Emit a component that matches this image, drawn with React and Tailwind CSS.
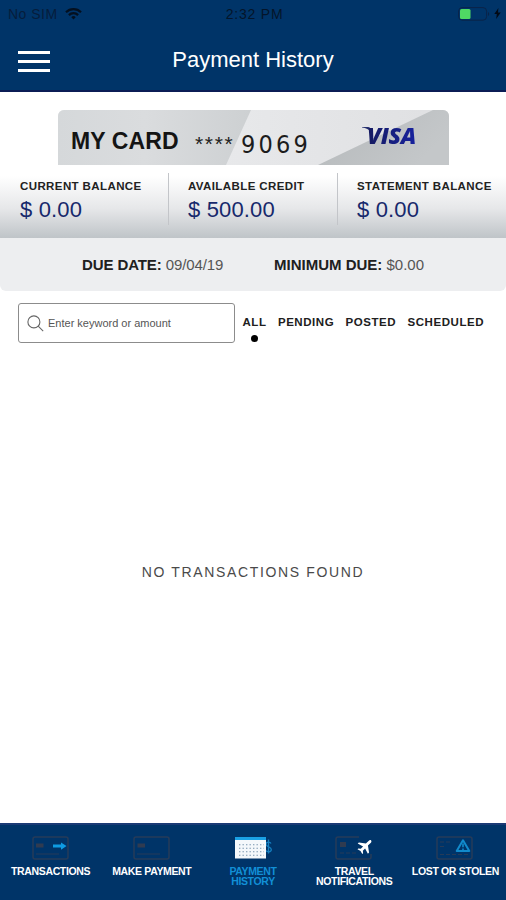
const balances = [
  { label: 'CURRENT BALANCE', amount: '$ 0.00' },
  { label: 'AVAILABLE CREDIT', amount: '$ 500.00' },
  { label: 'STATEMENT BALANCE', amount: '$ 0.00' },
];

const filters = ['ALL', 'PENDING', 'POSTED', 'SCHEDULED'];

function StatusBar() {
  return (
    <div className="flex h-7 items-center pr-[5px] pl-2 text-[14px] text-[#04152a]">
      <div className="flex flex-1 items-center gap-[7px]">
        <span className="tracking-[0.5px] text-[#061d3c]">No SIM</span>
        <svg className="-mt-px" width="17" height="13" viewBox="0 0 17 13" fill="none" stroke="#04101f" strokeWidth="2.2">
          <path d="M1 5.2a10.6 10.6 0 0 1 15 0" />
          <path d="M3.9 8.1a6.5 6.5 0 0 1 9.2 0" />
          <path d="M8.5 12.4 6.3 10.2a3.1 3.1 0 0 1 4.4 0Z" fill="#04101f" stroke="none" />
        </svg>
      </div>
      <span className="tracking-[0.8px]">2:32 PM</span>
      <div className="-mt-px flex flex-1 items-center justify-end gap-1">
        <svg width="32" height="14" viewBox="0 0 32 14">
          <rect x="0.6" y="0.6" width="28" height="12.6" rx="3.6" fill="none" stroke="#0a2348" />
          <rect x="2" y="2" width="10.5" height="10" rx="1.5" fill="#4fd964" />
          <path d="M30 5v4c1.6-.6 1.6-3.4 0-4Z" fill="#0a2348" />
        </svg>
        <svg width="7" height="11" viewBox="0 0 7 11">
          <path d="M4.4 0 .3 6h2.5L2.2 11l4.5-6.4H4Z" fill="#020a16" />
        </svg>
      </div>
    </div>
  );
}

function Header() {
  return (
    <header className="h-[92px] border-b-2 border-[#0b1c55] bg-[#003468]">
      <StatusBar />
      <div className="flex h-[62px] items-center pl-[18px]">
        <button aria-label="Menu" className="mt-1 flex w-8 flex-col gap-[6px]">
          <span className="h-[3px] bg-white" />
          <span className="h-[3px] bg-white" />
          <span className="h-[3px] bg-white" />
        </button>
        <h1 className="flex-1 pr-[50px] text-center text-[22px] text-white">Payment History</h1>
      </div>
    </header>
  );
}

function CreditCard() {
  return (
    <div className="mt-[18px] mr-[57px] ml-[58px] grid h-[55px] overflow-hidden rounded-t-[6px]">
      <svg className="col-start-1 row-start-1" width="391" height="55" viewBox="0 0 391 55">
        <defs>
          <linearGradient id="cardLeft" x1="0" y1="0" x2="1" y2="0">
            <stop offset="0" stopColor="#d5d8da" />
            <stop offset="0.45" stopColor="#dadcde" />
            <stop offset="1" stopColor="#cdd0d2" />
          </linearGradient>
          <linearGradient id="cardMiddle" x1="0" y1="0" x2="1" y2="0">
            <stop offset="0.4" stopColor="#e8e9eb" />
            <stop offset="1" stopColor="#dfe0e2" />
          </linearGradient>
          <linearGradient id="cardRight" x1="0" y1="0" x2="1" y2="0.4">
            <stop offset="0" stopColor="#b5b9bb" />
            <stop offset="1" stopColor="#c4c7c9" />
          </linearGradient>
        </defs>
        <path d="M0 0h391v55H0Z" fill="url(#cardMiddle)" />
        <path d="M0 0h193l-25 55H0Z" fill="url(#cardLeft)" />
        <path d="M375 0h16v55H260Z" fill="url(#cardRight)" />
      </svg>
      <div className="col-start-1 row-start-1 flex items-center pt-[8px] pl-[13px]">
        <span className="w-[124px] text-[23px] font-bold tracking-[0.1px] text-[#141414]">MY CARD</span>
        <span className="w-[46px] pt-[4px] text-[21px] leading-none tracking-[1.7px] text-[#222]">****</span>
        <span className="w-[121px] pt-[6px] font-['DejaVu_Sans_Condensed','DejaVu_Sans',sans-serif] text-[25px] leading-none tracking-[3.2px] text-[#1c1c1c]">
          9069
        </span>
        <span className="flex items-start pb-3">
          <svg className="mt-[5px] -mr-1" width="9" height="5" viewBox="0 0 9 5">
            <path d="M0 0h6q3 0 3 5Q6 1.5 0 .6Z" fill="#26306f" />
          </svg>
          <span className="bg-gradient-to-r from-[#151a60] to-[#1722a4] bg-clip-text pr-1 font-['Open_Sans',sans-serif] text-[23px] leading-[27px] font-extrabold tracking-[-0.4px] text-transparent italic">
            VISA
          </span>
        </span>
      </div>
    </div>
  );
}

function BalanceSummary() {
  return (
    <section>
      <div className="flex h-[73px] bg-gradient-to-b from-white from-15% via-[#e6e7e9] via-60% to-[#bfc4c8] pt-2">
        {balances.map((item, i) => (
          <div
            key={item.label}
            className={i === 0 ? 'h-[52px] w-[168px] pl-5' : 'h-[52px] w-[169px] border-l border-[#c3c5c9] pl-[19px]'}
          >
            <p className="mt-[5px] text-[11.5px] leading-4 font-bold tracking-[0.4px] whitespace-nowrap text-[#222]">{item.label}</p>
            <p className="text-[22px] leading-[31px] tracking-[0.15px] text-[#17296c]">{item.amount}</p>
          </div>
        ))}
      </div>
      <div className="flex h-[53px] items-center rounded-b-md bg-[#edeef0] pt-px pl-[82px] text-[15px] whitespace-nowrap text-[#555]">
        <p className="w-[192px] tracking-[-0.1px]">
          <b className="text-[#202020]">DUE DATE:</b> 09/04/19
        </p>
        <p>
          <b className="text-[#202020]">MINIMUM DUE:</b> $0.00
        </p>
      </div>
    </section>
  );
}

function FilterBar() {
  return (
    <div className="mt-3 flex h-10 pl-[18px]">
      <label className="flex w-[217px] items-center rounded-[3px] border border-[#8c8c8c] pl-2">
        <svg width="17" height="17" viewBox="0 0 17 17" fill="none" stroke="#666" strokeWidth="1.1">
          <circle cx="6.9" cy="6.9" r="6" />
          <path d="m11.2 11.2 5 5" />
        </svg>
        <input
          className="ml-1 w-44 text-[11px] outline-none placeholder:text-[#555]"
          placeholder="Enter keyword or amount"
        />
      </label>
      <nav className="ml-[7.5px] flex gap-[11.4px] pt-[11.5px] text-[11.5px] leading-[14px] font-bold tracking-[0.55px] text-[#202020]">
        {filters.map((filter, i) => (
          <button key={filter} className="flex flex-col items-center">
            {filter}
            {i === 0 && <span className="mt-[6px] size-[7px] rounded-full bg-black" />}
          </button>
        ))}
      </nav>
    </div>
  );
}

function CardOutline({ children }) {
  return (
    <svg width="38" height="24" viewBox="0 0 38 24" fill="none">
      <rect x="1" y="1" width="35" height="22" rx="2" stroke="#263b58" strokeWidth="1.5" />
      {children}
    </svg>
  );
}

function TransactionsIcon() {
  return (
    <CardOutline>
      <path d="M4 7.5h7.5v4H4Z" fill="#303b50" />
      <path d="M4 18h23" stroke="#263b58" />
      <path d="M21 8.6h8V6.5l5.5 3.6-5.5 3.6v-2.1h-8Z" fill="#0e9be2" />
    </CardOutline>
  );
}

function MakePaymentIcon() {
  return (
    <CardOutline>
      <path d="M4.5 7.5H12v4H4.500Z" fill="#303b50" />
      <path d="M4 18h23" stroke="#263b58" />
    </CardOutline>
  );
}

function HistoryIcon() {
  return (
    <svg width="38" height="24" viewBox="0 0 38 24">
      <path d="M37 7.5c-1-2-5-2-5 .8 0 3 5.3 2 5.3 5.2 0 2.8-4.7 3-5.800.6M34.5 3.500v14" fill="none" stroke="#147fc0" strokeWidth="1.3" />
      <rect x="1" y="1" width="31" height="21.5" fill="#f4f8fb" />
      <rect x="1" y="1" width="31" height="3" fill="#1aa0e4" />
      <path d="M5 8.7h25M5 12.2h25M5 15.7h25M5 19.2h25" stroke="#7593ad" strokeWidth="1.1" strokeDasharray="1.4 2.1" />
    </svg>
  );
}

function TravelIcon() {
  return (
    <CardOutline>
      <rect x="5" y="6" width="6" height="5" fill="#303b50" />
      <path d="M5 17h18" stroke="#263b58" strokeDasharray="4 2" />
      {/* gap in the outline behind the plane */}
      <path d="M24 0h14v18H24Z" fill="#003468" />
      <g transform="translate(30.5 10) rotate(45) scale(.72)">
        <path
          d="M0-11C1.3-11 2-9.5 2-8v5.2L10 3v2.3L2 2.8v4.4l2.7 2.2V11L0 9.8-4.7 11V9.4L-2 7.2V2.8l-8 2.5V3l8-5.8V-8c0-1.5.7-3 2-3Z"
          fill="white"
        />
      </g>
    </CardOutline>
  );
}

function LostIcon() {
  return (
    <CardOutline>
      <path d="M4 6h10M4 10.5h6M4 18.5h30" stroke="#263b58" strokeDasharray="4 2" />
      <path d="M27 4.3 33.3 15H20.7Z" stroke="#118acb" strokeWidth="2" strokeLinejoin="round" />
      <path d="M27 7.5v3.7M27 12.4v1.6" stroke="#118acb" strokeWidth="1.6" />
    </CardOutline>
  );
}

const tabs = [
  { lines: ['TRANSACTIONS'], Icon: TransactionsIcon },
  { lines: ['MAKE PAYMENT'], Icon: MakePaymentIcon },
  { lines: ['PAYMENT', 'HISTORY'], Icon: HistoryIcon, active: true },
  { lines: ['TRAVEL', 'NOTIFICATIONS'], Icon: TravelIcon },
  { lines: ['LOST OR STOLEN'], Icon: LostIcon },
];

function BottomNav() {
  return (
    <nav className="grid h-[77px] grid-cols-5 border-t-2 border-[#1b3a75] bg-[#003468] pt-[11px]">
      {tabs.map(({ lines, Icon, active }) => (
        <button
          key={lines[0]}
          className={
            active
              ? 'flex flex-col items-center text-[10.5px] leading-[10px] font-bold tracking-[-0.35px] text-[#128fd6]'
              : 'flex flex-col items-center text-[10.5px] leading-[10px] font-bold tracking-[-0.35px] text-white'
          }
        >
          <Icon />
          <span className="mt-[6px] whitespace-nowrap">
            {lines.map((line) => (
              <span key={line} className="block">{line}</span>
            ))}
          </span>
        </button>
      ))}
    </nav>
  );
}

export default function App() {
  return (
    <div className="flex h-[900px] w-[506px] flex-col overflow-hidden bg-white font-['Liberation_Sans',Arial,sans-serif]">
      <Header />
      <CreditCard />
      <BalanceSummary />
      <FilterBar />
      <main className="flex-1 pt-[219px] text-center text-[14px] tracking-[1.65px] text-[#4a4a4a]">
        NO TRANSACTIONS FOUND
      </main>
      <BottomNav />
    </div>
  );
}
